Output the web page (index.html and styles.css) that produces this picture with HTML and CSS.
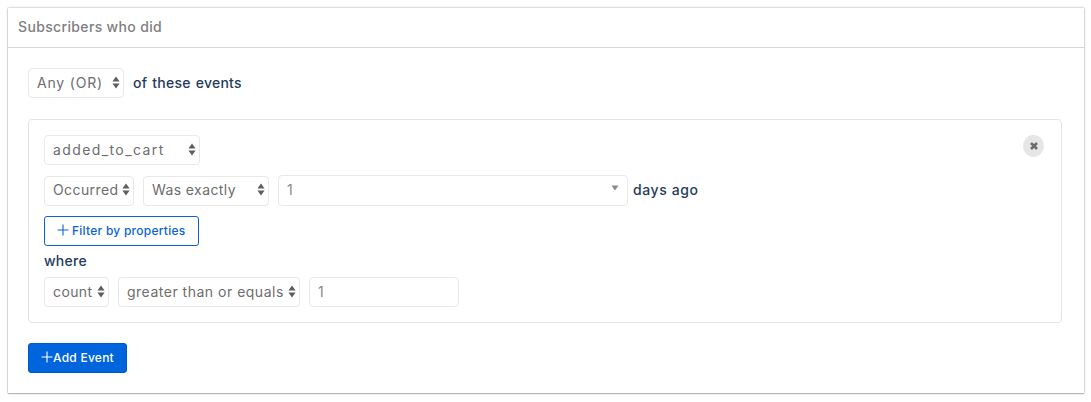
FILE: index.html
```html
<!DOCTYPE html>
<html lang="en">
<head>
<meta charset="utf-8">
<title>Subscribers who did</title>
<link rel="stylesheet" href="styles.css">
</head>
<body>
<svg class="defs" width="0" height="0" aria-hidden="true">
  <symbol id="updown" viewBox="0 0 8 13"><path d="M4 0.5 7.6 5.5H0.4Z M4 12.5 0.4 7.5H7.6Z"/></symbol>
</svg>
<section class="card">
  <header class="card-head">Subscribers who did</header>
  <div class="card-body">
    <div class="row top-row">
      <div class="ctl w-any"><span>Any (OR)</span><svg class="arrows"><use href="#updown"/></svg></div>
      <span class="label">of these events</span>
    </div>
    <div class="event">
      <button class="close" aria-label="Remove"><svg viewBox="0 0 10 10" width="10" height="10"><path d="M2 2 8 8M8 2 2 8"/></svg></button>
      <div class="row"><div class="ctl w-event"><span>added_to_cart</span><svg class="arrows"><use href="#updown"/></svg></div></div>
      <div class="row">
        <div class="ctl w-occ"><span>Occurred</span><svg class="arrows"><use href="#updown"/></svg></div>
        <div class="ctl w-was"><span>Was exactly</span><svg class="arrows"><use href="#updown"/></svg></div>
        <div class="ctl w-days"><span class="num">1</span><svg class="caret" viewBox="0 0 8 6" width="8" height="6"><path d="M0.5 0.5H7.5L4 5.5Z"/></svg></div>
        <span class="label tight">days ago</span>
      </div>
      <button class="btn-outline"><svg class="plus" viewBox="0 0 12 12" width="12" height="12"><path d="M6 0.5V11.5M0.5 6H11.5"/></svg>Filter by properties</button>
      <div class="where label">where</div>
      <div class="row last">
        <div class="ctl w-count"><span>count</span><svg class="arrows"><use href="#updown"/></svg></div>
        <div class="ctl w-gte"><span>greater than or equals</span><svg class="arrows"><use href="#updown"/></svg></div>
        <div class="ctl w-val"><span class="num">1</span></div>
      </div>
    </div>
    <button class="btn-primary"><svg class="plus" viewBox="0 0 12 12" width="12" height="12"><path d="M6 0.5V11.5M0.5 6H11.5"/></svg>Add Event</button>
  </div>
</section>
</body>
</html>
```
FILE: styles.css
```css
* { box-sizing: border-box; }
html, body { margin: 0; background: #fff; }
body { padding: 8px 7px 9px 8px; font-family: Inter, "Noto Sans", sans-serif; }
.defs { position: absolute; }
.card {
  height: 385px;
  background: #fff;
  box-shadow: 0 0 2px rgba(0,0,0,.4), 0 1px 1px rgba(0,0,0,.18);
}
.card-head {
  height: 40px;
  padding: 0 10px 2px;
  display: flex;
  align-items: center;
  border-bottom: 1px solid #d6d6d6;
  color: #808080;
  font-size: 14px;
  font-weight: 500;
  letter-spacing: .35px;
}
.card-body { padding: 20px 22px 20px 20px; }
.row { display: flex; align-items: center; gap: 9px; margin-bottom: 10px; }
.top-row { margin-bottom: 21px; }
.row.last { margin-bottom: 0; }
.ctl {
  height: 30px;
  flex: none;
  display: flex;
  align-items: center;
  justify-content: space-between;
  padding: 0 3px 2px 8px;
  border: 1px solid #e8e8e8;
  border-radius: 4px;
  background: #fff;
  color: #6d6d6d;
  font-size: 14px;
  letter-spacing: .4px;
  white-space: nowrap;
}
.arrows { width: 8px; height: 13px; fill: #5f5f5f; flex: none; }
.caret { fill: #8a8a8a; margin: 0 5px 4px 0; }
.num { color: #8a8a8a; }
.w-any { width: 96px; letter-spacing: .8px; }
.w-event { width: 156px; letter-spacing: 1.4px; }
.w-occ { width: 90px; }
.w-was { width: 126px; }
.w-days { width: 350px; height: 31px; }
.w-count { width: 65px; }
.w-gte { width: 182px; letter-spacing: .5px; }
.w-val { width: 150px; }
.label {
  color: #243b5a;
  font-size: 14px;
  font-weight: 500;
  letter-spacing: .25px;
  word-spacing: 1px;
  padding-bottom: 2px;
}
.tight { margin-left: -4px; letter-spacing: .6px; word-spacing: 0; }
.event {
  position: relative;
  height: 204px;
  padding: 15px;
  border: 1px solid #e4e4e4;
  border-radius: 4px;
  margin-bottom: 20px;
}
.close {
  position: absolute;
  top: 15px;
  right: 17px;
  width: 21px;
  height: 22px;
  padding: 0;
  display: flex;
  align-items: center;
  justify-content: center;
  border: 0;
  border-radius: 50%;
  background: #e6e6e6;
}
.close path { stroke: #6c6c6c; stroke-width: 2.6; fill: none; }
.plus { flex: none; }
.plus path { fill: none; stroke: currentColor; stroke-width: 1.1; }
.btn-outline, .btn-primary {
  display: flex;
  align-items: center;
  height: 30px;
  border-radius: 3px;
  font-family: inherit;
  font-size: 12px;
  font-weight: 500;
  letter-spacing: .25px;
  padding: 0 0 2px;
}
.btn-outline {
  width: 155px;
  padding-left: 12px;
  gap: 3px;
  background: #fff;
  border: 1px solid #0b62d6;
  color: #0b62d6;
}
.where { margin: 6px 0 8px; line-height: 17px; padding: 0; }
.btn-primary {
  width: 99px;
  padding-left: 12px;
  gap: 0;
  background: #0065dd;
  border: 1px solid #0058c4;
  color: #fff;
}
```
